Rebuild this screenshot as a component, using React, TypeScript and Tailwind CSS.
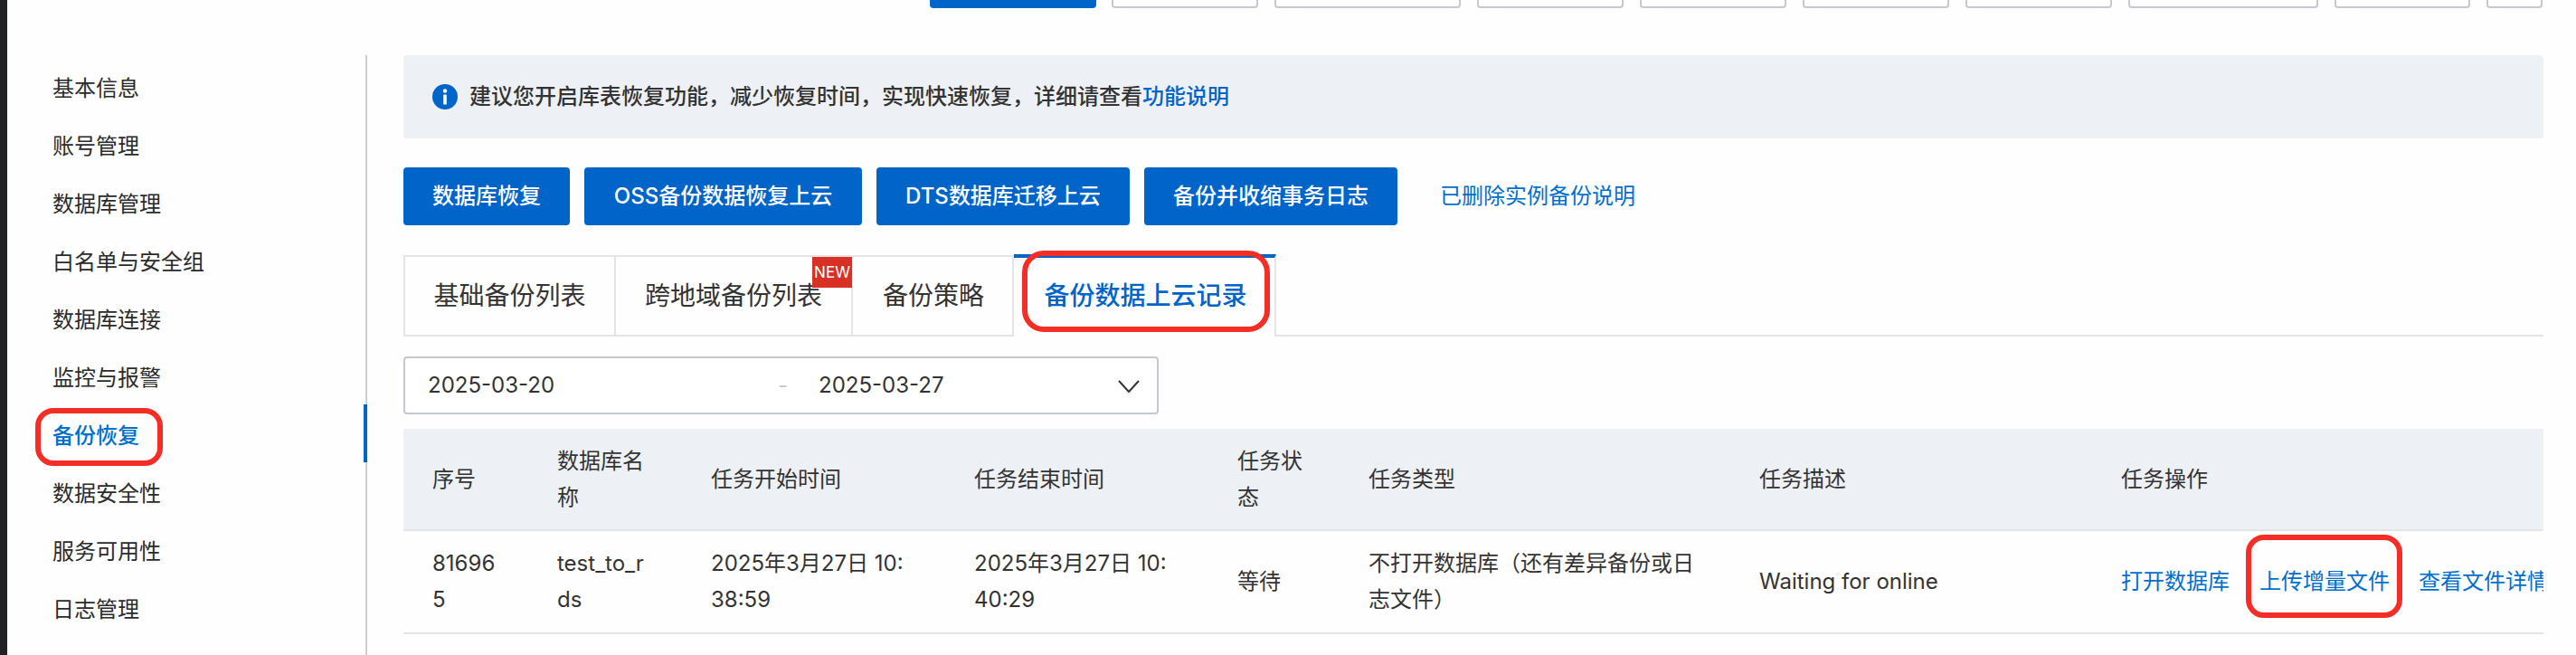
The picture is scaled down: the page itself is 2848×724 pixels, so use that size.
const menus = ["基本信息", "账号管理", "数据库管理", "白名单与安全组", "数据库连接", "监控与报警", "备份恢复", "数据安全性", "服务可用性", "日志管理"];
const topButtons = ["w-[162px]", "w-[206px]", "w-[162px]", "w-[162px]", "w-[162px]", "w-[162px]", "w-[210px]", "w-[150px]", "w-[62px]"];

function Sidebar() {
  return (
    <div className="w-[398px] shrink-0 border-r-2 border-[#c9ced4] relative pt-[5px]">
      {menus.map((m) => (
        <div key={m} className={`h-16 flex items-center pl-[50px] text-2xl ${m === "备份恢复" ? "text-[#0070cc] font-medium" : "text-[#2b2b2b]"}`}>
          {m}
        </div>
      ))}
      <div className="absolute right-[-2px] top-[386px] w-1 h-16 bg-[#0064c8]" />
      <div className="absolute left-[31px] top-[390px] w-[141px] h-16 border-[6px] border-[#f52d27] rounded-[20px]" />
    </div>
  );
}

function Actions() {
  return (
    <div className="flex items-center text-[#0070cc] whitespace-nowrap">
      <span>打开数据库</span>
      <span className="w-0.5 h-[23px] bg-[#d8d8d8] ml-[17px] mr-[16px]" />
      <span className="relative">
        上传增量文件
        <span className="absolute left-[-15px] top-[-32px] w-[173px] h-[92px] border-[6px] border-[#f52d27] rounded-[20px]" />
      </span>
      <span className="w-0.5 h-[23px] bg-[#d8d8d8] ml-[16px] mr-[16px]" />
      <span>查看文件详情</span>
    </div>
  );
}

const columns: { head: string; cell: React.ReactNode; width: string }[] = [
  { head: "序号", cell: "816965", width: "w-[138px]" },
  { head: "数据库名称", cell: "test_to_rds", width: "w-[170px]" },
  { head: "任务开始时间", cell: "2025年3月27日 10:38:59", width: "w-[291px]" },
  { head: "任务结束时间", cell: "2025年3月27日 10:40:29", width: "w-[291px]" },
  { head: "任务状态", cell: "等待", width: "w-[145px]" },
  { head: "任务类型", cell: "不打开数据库（还有差异备份或日志文件）", width: "w-[432px]" },
  { head: "任务描述", cell: "Waiting for online", width: "w-[400px]" },
  { head: "任务操作", cell: <Actions />, width: "w-[499px]" },
];

export default function App() {
  return (
    <div className="w-[2848px] h-[724px] overflow-hidden flex flex-col bg-[#fefefe] text-2xl leading-10 text-[#333] font-['Inter','Noto_Sans_CJK_SC',sans-serif] border-l-8 border-[#202124]">
      <div className="h-[61px] shrink-0 flex items-start gap-[18px] pl-[1020px]">
        <div className="w-[184px] h-[9px] -mr-px bg-[#0064c8] rounded-b-[4px]" />
        {topButtons.map((w, i) => (
          <div key={i} className={`${w} h-[9px] border-2 border-t-0 border-[#c4c9cf] rounded-b-[4px] bg-white`} />
        ))}
      </div>
      <div className="flex flex-1 min-h-0">
        <Sidebar />
        <div className="w-[2366px] ml-[40px] shrink-0">
          <div className="h-[92px] rounded-[4px] bg-[#edf0f5] flex items-center pl-8 font-medium text-[#333]">
            <svg viewBox="0 0 28 28" className="w-7 h-7 mr-[13px] shrink-0">
              <circle cx="14" cy="14" r="14" fill="#0064c8" />
              <circle cx="14" cy="7.5" r="2.2" fill="#fff" />
              <rect x="12.2" y="11.5" width="3.6" height="11" rx="0.6" fill="#fff" />
            </svg>
            <span>建议您开启库表恢复功能，减少恢复时间，实现快速恢复，详细请查看<span className="text-[#0064c8]">功能说明</span></span>
          </div>

          <div className="flex items-center gap-4 mt-8 h-16">
            {["数据库恢复", "OSS备份数据恢复上云", "DTS数据库迁移上云", "备份并收缩事务日志"].map((b, i) => (
              <div key={b} className={`h-16 flex items-center justify-center rounded-[4px] bg-[#0064c8] text-white font-medium ${["w-[184px]", "w-[307px]", "w-[280px]", "w-[280px]"][i]}`}>
                {b}
              </div>
            ))}
            <span className="ml-[31px] text-[#0070cc]">已删除实例备份说明</span>
          </div>

          <div className="flex h-[90px] mt-[33px] text-[28px] border-b-2 border-[#e3e4e6]">
            <div className="w-[235px] h-[90px] flex items-center justify-center border-2 border-[#e3e4e6]">基础备份列表</div>
            <div className="relative w-[262px] h-[90px] flex items-center justify-center border-y-2 border-r-2 border-[#e3e4e6]">
              跨地域备份列表
              <span className="absolute right-[-1px] top-0 w-[44px] h-[34px] bg-[#d93026] text-white text-[17px] leading-[34px] text-center">NEW</span>
            </div>
            <div className="w-[178px] h-[90px] pl-[2px] flex items-center justify-center border-y-2 border-r-2 border-[#e3e4e6]">备份策略</div>
            <div className="relative w-[290px] h-[91px] -mt-px pb-[3px] pl-[3px] flex items-center justify-center bg-[#fefefe] border-t-4 border-t-[#0064c8] border-r-2 border-r-[#e3e4e6] text-[#0064c8] font-medium">
              备份数据上云记录
              <span className="absolute left-[9px] top-[-8px] w-[274px] h-[90px] border-[6px] border-[#f52d27] rounded-[24px]" />
            </div>
          </div>

          <div className="w-[835px] h-16 mt-[22px] border-2 border-[#c4c9cf] rounded-[4px] flex items-center pl-[25px] bg-white relative">
            <span>2025-03-20</span>
            <span className="ml-[247px] text-[#c4c9cf]">-</span>
            <span className="ml-[34px]">2025-03-27</span>
            <svg viewBox="0 0 24 24" className="absolute right-[19px] top-[19px] w-6 h-6" fill="none" stroke="#333" strokeWidth="2">
              <path d="M1 6l11 12L23 6" />
            </svg>
          </div>

          <div className="flex mt-4 h-[113px] bg-[#edf0f5] border-b-2 border-[#e3e4e6] items-center overflow-hidden">
            {columns.map((c) => (
              <div key={c.head} className={`${c.width} shrink-0 px-8 break-all`}>{c.head}</div>
            ))}
          </div>
          <div className="flex h-[114px] border-b-2 border-[#e3e4e6] items-center overflow-hidden">
            {columns.map((c) => (
              <div key={c.head} className={`${c.width} shrink-0 pl-8 ${c.head === "任务操作" ? "" : "pr-8"} break-all`}>{c.cell}</div>
            ))}
          </div>
        </div>
      </div>
    </div>
  );
}
